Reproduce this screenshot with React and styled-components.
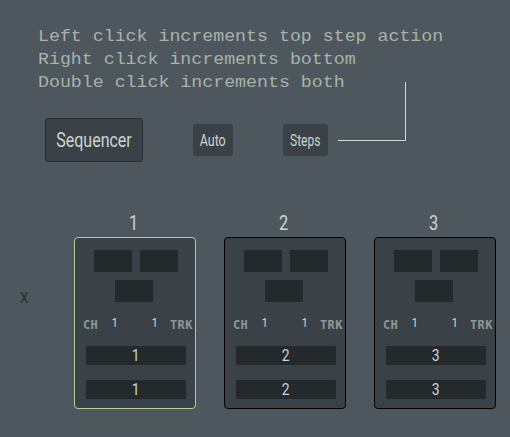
import React from 'react';
import styled, { createGlobalStyle } from 'styled-components';

const GlobalStyle = createGlobalStyle`
    * {
        box-sizing: border-box;
    }
    body {
        margin: 0;
        background-color: #4f575e;
        font-family: 'Roboto', 'Liberation Sans', sans-serif;
        color: #ccd5cf;
        overflow: hidden;
    }
`;

const Page = styled.div`
    position: relative;
    width: 510px;
    height: 437px;
    padding-top: 25px;
    background-color: #4f575e;
`;

const Help = styled.div`
    width: 366px;
    height: 69px;
    margin-left: 38px;
    font-family: 'Liberation Mono', monospace;
    font-size: 16.5px;
    line-height: 23px;
    color: #a8b2a9;
    white-space: pre;
    transform: scaleX(1.106);
    transform-origin: left;
`;

// narrow lettering used all over the panel
const Label = styled.span`
    display: block;
    font-size: ${(p) => p.$size}px;
    line-height: 1;
    white-space: nowrap;
    transform: scaleX(${(p) => p.$narrow || 0.82});
`;

const Toolbar = styled.div`
    display: flex;
    align-items: center;
    height: 44px;
    margin: 24px 0 0 45px;
`;

const Button = styled.button`
    display: flex;
    align-items: center;
    justify-content: center;
    flex: none;
    width: ${(p) => p.$width}px;
    height: ${(p) => (p.$main ? 44 : 32)}px;
    margin: 0 50px 0 0;
    padding: 2px 0 0;
    border: ${(p) => (p.$main ? '1px solid #262c30' : 'none')};
    border-radius: 3px;
    background-color: #3a4247;
    color: inherit;
    font-family: inherit;
`;

const Pointer = styled.svg`
    position: absolute;
    left: 338px;
    top: 82px;
    fill: none;
    stroke: #d0d8d3;
`;

const Board = styled.div`
    display: flex;
    margin-top: 51px;
`;

const Close = styled.div`
    flex: none;
    width: 74px;
    padding: 79px 0 0 19px;
    color: #262c30;

    span {
        width: 10px;
        text-align: center;
    }
`;

const Track = styled.div`
    flex: none;
    width: 122px;
    margin-right: 28px;
`;

const Title = styled.div`
    display: flex;
    justify-content: center;
    height: 24px;
    padding-right: 3px;
`;

const Card = styled.div`
    height: 172px;
    padding: 12px 0 0;
    border: 1px solid ${(p) => (p.$active ? '#b5ce93' : '#000')};
    border-radius: 4px;
    background-color: #3a4247;
`;

const Pads = styled.div`
    display: flex;
    flex-wrap: wrap;
    justify-content: center;
    gap: 8px;
    width: 84px;
    margin-left: 19px;
`;

const Pad = styled.div`
    width: 38px;
    height: 22px;
    margin-right: ${(p) => (p.$last ? 4 : 0)}px;
    background-color: #24292c;
`;

const Info = styled.div`
    display: flex;
    align-items: flex-start;
    height: 14px;
    margin: 14px 0 16px 8px;
    color: #d5ddd8;
`;

const Tag = styled.span`
    width: ${(p) => p.$width}px;
    padding-top: 3px;
    font: bold 12px/12px 'DejaVu Sans Mono', monospace;
    letter-spacing: 0.4px;
    color: #8e9895;
`;

const Value = styled.div`
    display: flex;
    justify-content: center;
    width: 30px;

    & + & {
        margin-left: 10px;
    }
`;

const Bar = styled.div`
    display: flex;
    align-items: center;
    justify-content: center;
    width: 100px;
    height: 19px;
    margin: 0 0 15px 11px;
    border-radius: 1px;
    background-color: #24292c;
`;

const TrackColumn = ({ number, active }) => (
    <Track>
        <Title>
            <Label $size={20}>{number}</Label>
        </Title>
        <Card $active={active}>
            <Pads>
                <Pad />
                <Pad />
                <Pad $last />
            </Pads>
            <Info>
                <Tag $width={17}>CH</Tag>
                <Value>
                    <Label $size={13}>1</Label>
                </Value>
                <Value>
                    <Label $size={13}>1</Label>
                </Value>
                <Tag $width={22}>TRK</Tag>
            </Info>
            <Bar>
                <Label $size={17}>{number}</Label>
            </Bar>
            <Bar>
                <Label $size={17}>{number}</Label>
            </Bar>
        </Card>
    </Track>
);

const App = () => {
    return (
        <>
            <GlobalStyle />
            <Page>
                <Help>
                    <div>Left click increments top step action</div>
                    <div>Right click increments bottom</div>
                    <div>Double click increments both</div>
                </Help>
                <Toolbar>
                    <Button $width={98} $main>
                        <Label $size={19.5}>Sequencer</Label>
                    </Button>
                    <Button $width={40}>
                        <Label $size={16} $narrow={0.78}>Auto</Label>
                    </Button>
                    <Button $width={45}>
                        <Label $size={16} $narrow={0.75}>Steps</Label>
                    </Button>
                </Toolbar>
                <Pointer width="68" height="59">
                    <path d="M67.5 0V58.5H0" />
                </Pointer>
                <Board>
                    <Close>
                        <Label $size={14.5} $narrow={0.9}>X</Label>
                    </Close>
                    <TrackColumn number={1} active />
                    <TrackColumn number={2} />
                    <TrackColumn number={3} />
                </Board>
            </Page>
        </>
    );
};

export default App;
